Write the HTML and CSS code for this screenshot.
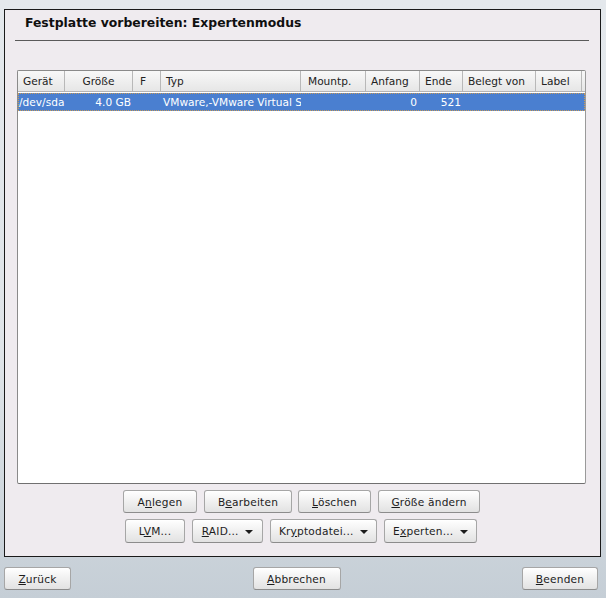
FILE: index.html
```html
<!DOCTYPE html>
<html lang="de">
<head>
    <meta charset="UTF-8">
    <title>Festplatte vorbereiten: Expertenmodus</title>
    <link rel="stylesheet" href="styles.css">
</head>
<body>

    <div class="panel">
        <h1 class="titulo">Festplatte vorbereiten: Expertenmodus</h1>
        <div class="linea"></div>

        <!-- Tabla de particiones -->
        <div class="tabla">
            <div class="fila cabecera">
                <div class="c c1">Gerät</div>
                <div class="c c2 centro">Größe</div>
                <div class="c c3">F</div>
                <div class="c c4">Typ</div>
                <div class="c c5">Mountp.</div>
                <div class="c c6">Anfang</div>
                <div class="c c7">Ende</div>
                <div class="c c8">Belegt von</div>
                <div class="c c9">Label</div>
            </div>
            <div class="fila seleccion">
                <div class="c c1">/dev/sda</div>
                <div class="c c2 derecha">4.0 GB</div>
                <div class="c c3"></div>
                <div class="c c4">VMware,-VMware Virtual S</div>
                <div class="c c5"></div>
                <div class="c c6 derecha">0</div>
                <div class="c c7 derecha">521</div>
                <div class="c c8"></div>
                <div class="c c9"></div>
            </div>
        </div>

        <div class="botones">
            <button class="btn b-anlegen">A<u>n</u>legen</button>
            <button class="btn b-bearbeiten">B<u>e</u>arbeiten</button>
            <button class="btn b-loeschen"><u>L</u>öschen</button>
            <button class="btn b-groesse"><u>G</u>röße ändern</button>
        </div>
        <div class="botones fila2">
            <button class="btn b-lvm">L<u>V</u>M...</button>
            <button class="btn b-raid"><u>R</u>AID... <span class="flecha"></span></button>
            <button class="btn b-krypto">Kr<u>y</u>ptodatei... <span class="flecha"></span></button>
            <button class="btn b-experten">E<u>x</u>perten... <span class="flecha"></span></button>
        </div>
    </div>

    <div class="pie">
        <button class="btn b-zurueck"><u>Z</u>urück</button>
        <button class="btn b-abbrechen"><u>A</u>bbrechen</button>
        <button class="btn b-beenden"><u>B</u>eenden</button>
    </div>

</body>
</html>
```

FILE: styles.css
```css
/* --- General --- */
body {
    margin: 0;
    width: 606px;
    height: 598px;
    font-family: "DejaVu Sans", "Noto Sans", sans-serif;
    font-size: 10.6px;
    color: #1c1c1c;
    background: linear-gradient(to bottom, #e4e8ec, #dfe4e8 60%, #c5ced6);
    overflow: hidden;
}

/* --- Panel principal --- */
.panel {
    margin: 9px 0 0 4px;
    width: 595px;
    height: 546px;
    border: 1px solid #1a1a1a;
    background-color: #efebef;
    display: flex;
    flex-direction: column;
    box-sizing: content-box;
}
.titulo {
    margin: 4px 0 0 20px;
    font-size: 12.4px;
    font-weight: bold;
    line-height: 17px;
    color: #101010;
}
.linea {
    margin: 9px 11px 0 10px;
    height: 1px;
    background-color: #5a5a5a;
}

/* --- Tabla --- */
.tabla {
    margin: 29px 0 0 12px;
    width: 567px;
    height: 412px;
    border: 1px solid #8a8a8a;
    border-bottom-color: #707070;
    border-right-color: #9a9a9a;
    border-radius: 2px;
    background-color: #fff;
    overflow: hidden;
}
.fila { display: flex; height: 20px; }
.c {
    box-sizing: border-box;
    padding: 0 5px;
    line-height: 20px;
    white-space: nowrap;
    overflow: hidden;
    flex-shrink: 0;
}
.cabecera {
    background: linear-gradient(to bottom, #f8f8f8, #e6e6e6);
    border-bottom: 1px solid #b4b4b4;
}
.cabecera .c { border-right: 1px solid #b8b8b8; color: #222; }
.centro { text-align: center; }
.derecha { text-align: right; padding-right: 2px; }
.c1 { width: 47px; }
.c2 { width: 68px; }
.c3 { width: 28px; padding-left: 7px; }
.c4 { width: 140px; }
.c5 { width: 65px; padding-left: 7px; }
.c6 { width: 54px; }
.c7 { width: 43px; }
.c8 { width: 73px; }
.c9 { width: 46px; }
.seleccion {
    margin-top: 1px;
    height: 18px;
    background-color: #4a7fd0;
    color: #fff;
    outline: 1px dotted #c89a58;
    outline-offset: -1px;
}
.seleccion .c { line-height: 18px; }
.seleccion .c1 { padding-left: 1px; }
.seleccion .c4 { padding-left: 2px; padding-right: 0; }
.seleccion .c6 { padding-right: 3px; }

/* --- Botones --- */
.botones {
    display: flex;
    gap: 7px;
    margin-top: 6px;
    padding-left: 118px;
}
.fila2 { padding-left: 120px; }
.btn {
    font-family: "DejaVu Sans", "Noto Sans", sans-serif;
    font-size: 10.6px;
    color: #1c1c1c;
    height: 23px;
    padding: 0;
    border: 1px solid #a6a6a6;
    border-bottom-color: #8c8c8c;
    border-radius: 3px;
    background: linear-gradient(to bottom, #ffffff, #f0f0f0 50%, #e2e2e2);
    box-shadow: inset 0 1px 0 #fff;
    letter-spacing: 0.2px;
}
.fila2 .btn { height: 24px; }
.b-anlegen { width: 74px; }
.b-bearbeiten { width: 88px; }
.b-loeschen { width: 73px; margin-left: -1px; }
.b-groesse { width: 102px; }
.b-lvm { width: 60px; }
.b-raid { width: 71px; }
.b-krypto { width: 107px; }
.b-experten { width: 93px; }
.flecha {
    display: inline-block;
    width: 0;
    height: 0;
    margin-left: 3px;
    vertical-align: middle;
    border-left: 4px solid transparent;
    border-right: 4px solid transparent;
    border-top: 4px solid #1c1c1c;
}

/* --- Pie --- */
.pie {
    display: flex;
    justify-content: space-between;
    margin: 10px 8px 0 4px;
}
.b-zurueck { width: 67px; }
.b-abbrechen { width: 88px; }
.b-beenden { width: 76px; }
```
